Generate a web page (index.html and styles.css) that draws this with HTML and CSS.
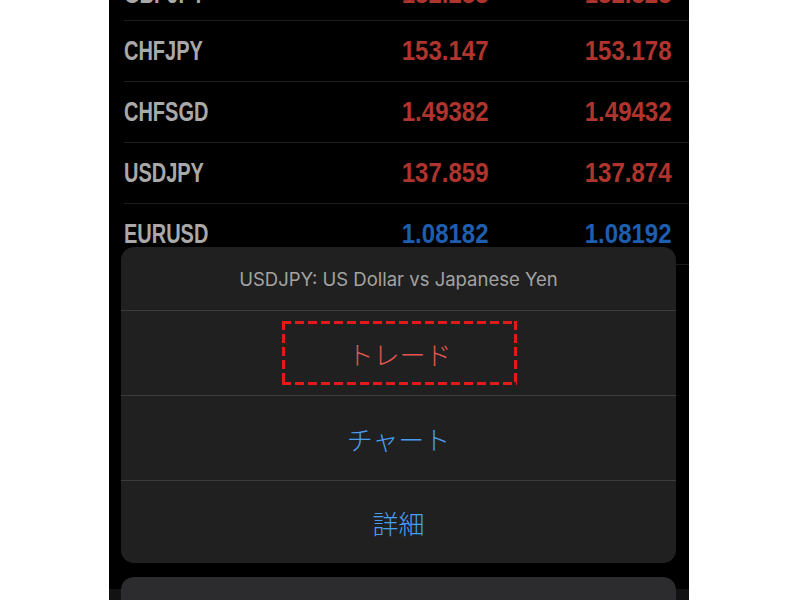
FILE: index.html
```html
<!DOCTYPE html>
<html lang="ja">
<head>
<meta charset="utf-8">
<title>Quotes</title>
<link rel="stylesheet" href="styles.css">
</head>
<body>
<div class="phone">
  <div class="quotes">
    <div class="row"><span class="sym">GBPJPY</span><span class="px down"><span class="num">182.288</span></span><span class="px down"><span class="num">182.323</span></span></div>
    <div class="row"><span class="sym">CHFJPY</span><span class="px down"><span class="num">153.147</span></span><span class="px down"><span class="num">153.178</span></span></div>
    <div class="row"><span class="sym">CHFSGD</span><span class="px down"><span class="num">1.49382</span></span><span class="px down"><span class="num">1.49432</span></span></div>
    <div class="row"><span class="sym">USDJPY</span><span class="px down"><span class="num">137.859</span></span><span class="px down"><span class="num">137.874</span></span></div>
    <div class="row"><span class="sym">EURUSD</span><span class="px up"><span class="num">1.08182</span></span><span class="px up"><span class="num">1.08192</span></span></div>
  </div>
  <div class="sheet-wrap">
    <div class="sheet">
      <div class="sheet-title">USDJPY: US Dollar vs Japanese Yen</div>
      <div class="action trade"><span class="mark">トレード</span></div>
      <div class="action">チャート</div>
      <div class="action last">詳細</div>
    </div>
    <div class="cancel">キャンセル</div>
  </div>
</div>
</body>
</html>
```
FILE: styles.css
```css
html, body {
  margin: 0;
  padding: 0;
  background: #ffffff;
}
.phone {
  position: relative;
  width: 580px;
  height: 600px;
  margin-left: 109px;
  overflow: hidden;
  background: linear-gradient(to bottom, #000 589px, #121212 589px);
}
.quotes {
  margin-top: -38px;
}
.row {
  display: grid;
  grid-template-columns: 1fr 120px 183px;
  align-items: center;
  height: 60px;
  margin-left: 15px;
  padding-right: 17px;
  border-bottom: 1px solid #1c1c1c;
  font-family: "Liberation Sans", sans-serif;
  font-weight: 700;
  font-size: 27px;
}
.row:first-child {
  box-sizing: border-box;
  height: 59px;
  align-items: end;
  padding-bottom: 10px;
}
.sym {
  display: inline-block;
  justify-self: start;
  color: #a9a9a9;
  transform: scaleX(0.74);
  transform-origin: left center;
}
.px {
  text-align: right;
}
.num {
  display: inline-block;
  transform: scaleX(0.89);
  transform-origin: right center;
}
.down { color: #ae342d; }
.up { color: #1d5eb0; }

.sheet-wrap {
  position: absolute;
  top: 247px;
  left: 12px;
  right: 13px;
  display: flex;
  flex-direction: column;
  gap: 14px;
}
.sheet {
  background: #202020;
  border-radius: 13px;
  overflow: hidden;
}
.sheet-title {
  height: 63px;
  display: flex;
  align-items: center;
  justify-content: center;
  font-family: Inter, "Noto Sans", sans-serif;
  font-size: 18.5px;
  color: #a3a3a3;
  border-bottom: 1px solid #3c3c3c;
}
.action {
  height: 84px;
  display: flex;
  align-items: center;
  justify-content: center;
  font-family: "Noto Sans CJK JP", sans-serif;
  font-weight: 300;
  font-size: 26px;
  color: #4a9ef0;
  border-bottom: 1px solid #3c3c3c;
}
.action.last {
  height: 82px;
  border-bottom: none;
}
.action.trade {
  color: #e4564d;
}
.mark {
  box-sizing: border-box;
  width: 235px;
  height: 64px;
  margin-left: 2px;
  display: flex;
  align-items: center;
  justify-content: center;
  background:
    repeating-linear-gradient(90deg, #e3191b 0 9px, transparent 9px 13px) left top / 100% 3px no-repeat,
    repeating-linear-gradient(90deg, #e3191b 0 9px, transparent 9px 13px) left bottom / 100% 3px no-repeat,
    repeating-linear-gradient(180deg, #e3191b 0 9px, transparent 9px 13px) left top / 3px 100% no-repeat,
    repeating-linear-gradient(180deg, #e3191b 0 9px, transparent 9px 13px) right top / 3px 100% no-repeat;
}
.cancel {
  height: 84px;
  background: #2c2c2e;
  border-radius: 13px;
  display: flex;
  align-items: center;
  justify-content: center;
  font-family: "Noto Sans CJK JP", sans-serif;
  font-weight: 700;
  font-size: 26px;
  color: #4a9ef0;
}
```
